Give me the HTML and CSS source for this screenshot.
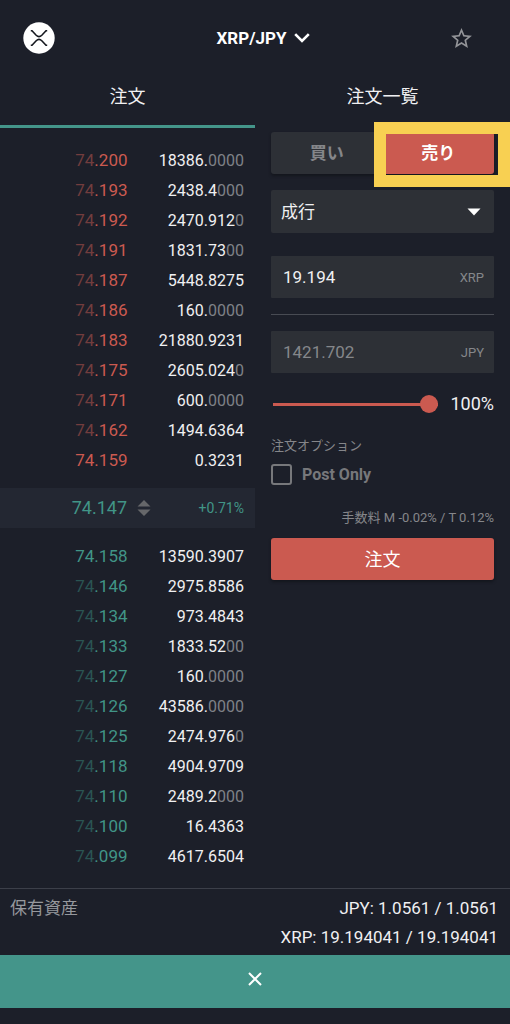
FILE: index.html
```html
<!DOCTYPE html>
<html lang="ja">
<head>
<meta charset="utf-8">
<meta name="viewport" content="width=device-width, initial-scale=1">
<title>XRP/JPY</title>
<link rel="stylesheet" href="styles.css">
</head>
<body>
<div class="app">
  <header class="header">
    <svg class="logo" viewBox="0 0 32 32" aria-label="XRP" role="img">
      <circle cx="16" cy="16" r="15.7" fill="#fff"/>
      <path d="M7.800 8.700H9L13.200 13.200Q16 16 18.800 13.200L23 8.700H24.200M7.800 23.300H9L13.200 18.800Q16 16 18.800 18.800L23 23.300H24.200" fill="none" stroke="#15181f" stroke-width="1.600"/>
    </svg>
    <button class="pair" type="button">XRP/JPY
      <svg class="chevron" viewBox="0 0 16 10" aria-hidden="true"><path d="M1.200 1.200L8 8l6.800-6.800" fill="none" stroke="#fff" stroke-width="2.600"/></svg>
    </button>
    <button class="favorite" type="button" aria-label="お気に入り">
      <svg class="star" viewBox="0 0 24 24" aria-hidden="true"><path fill="#939498" d="M22 9.240l-7.190-.620L12 2 9.190 8.630 2 9.240l5.460 4.730L5.820 21 12 17.270 18.180 21l-1.630-7.030L22 9.240zM12 15.400l-3.760 2.270 1-4.280-3.320-2.880 4.380-.380L12 6.100l1.710 4.040 4.380.380-3.320 2.880 1 4.280L12 15.400z"/></svg>
    </button>
  </header>

  <nav class="tabs">
    <button class="tab tab-active" type="button">注文</button>
    <button class="tab" type="button">注文一覧</button>
  </nav>

  <main class="main">
    <section class="book">
      <table class="orders asks">
        <tbody>
          <tr><td class="price"><span>74</span>.200</td><td class="amount">18386.<span>0000</span></td></tr>
          <tr><td class="price"><span>74</span>.193</td><td class="amount">2438.4<span>000</span></td></tr>
          <tr><td class="price"><span>74</span>.192</td><td class="amount">2470.912<span>0</span></td></tr>
          <tr><td class="price"><span>74</span>.191</td><td class="amount">1831.73<span>00</span></td></tr>
          <tr><td class="price"><span>74</span>.187</td><td class="amount">5448.8275</td></tr>
          <tr><td class="price"><span>74</span>.186</td><td class="amount">160.<span>0000</span></td></tr>
          <tr><td class="price"><span>74</span>.183</td><td class="amount">21880.9231</td></tr>
          <tr><td class="price"><span>74</span>.175</td><td class="amount">2605.024<span>0</span></td></tr>
          <tr><td class="price"><span>74</span>.171</td><td class="amount">600.<span>0000</span></td></tr>
          <tr><td class="price"><span>74</span>.162</td><td class="amount">1494.6364</td></tr>
          <tr><td class="price">74.159</td><td class="amount">0.3231</td></tr>
        </tbody>
      </table>
      <div class="last">
        <span class="last-price">74.147</span>
        <svg class="sort" viewBox="0 0 14 18" aria-hidden="true"><path d="M0.500 7.500L7 1l6.500 6.500zM0.500 10.500L7 17l6.500-6.500z" fill="#66676a"/></svg>
        <span class="change">+0.71%</span>
      </div>
      <table class="orders bids">
        <tbody>
          <tr><td class="price">74.158</td><td class="amount">13590.3907</td></tr>
          <tr><td class="price"><span>74</span>.146</td><td class="amount">2975.8586</td></tr>
          <tr><td class="price"><span>74</span>.134</td><td class="amount">973.4843</td></tr>
          <tr><td class="price"><span>74</span>.133</td><td class="amount">1833.52<span>00</span></td></tr>
          <tr><td class="price"><span>74</span>.127</td><td class="amount">160.<span>0000</span></td></tr>
          <tr><td class="price"><span>74</span>.126</td><td class="amount">43586.<span>0000</span></td></tr>
          <tr><td class="price"><span>74</span>.125</td><td class="amount">2474.976<span>0</span></td></tr>
          <tr><td class="price"><span>74</span>.118</td><td class="amount">4904.9709</td></tr>
          <tr><td class="price"><span>74</span>.110</td><td class="amount">2489.2<span>000</span></td></tr>
          <tr><td class="price"><span>74</span>.100</td><td class="amount">16.4363</td></tr>
          <tr><td class="price"><span>74</span>.099</td><td class="amount">4617.6504</td></tr>
        </tbody>
      </table>
    </section>

    <form class="form">
      <div class="sides">
        <button class="side" type="button">買い</button>
        <button class="side side-sell" type="button">売り</button>
        <div class="highlight"></div>
      </div>
      <div class="select-box">
        <select class="select" aria-label="注文タイプ"><option>成行</option></select>
        <svg class="caret" viewBox="0 0 14 8" aria-hidden="true"><path d="M0.500 0.500h13L7 7.500z" fill="#fff"/></svg>
      </div>
      <div class="field">
        <input class="input" id="qty" type="text" value="19.194">
        <label class="unit" for="qty">XRP</label>
      </div>
      <hr class="rule">
      <div class="field">
        <input class="input input-muted" id="total" type="text" value="1421.702">
        <label class="unit" for="total">JPY</label>
      </div>
      <div class="slider">
        <input class="range" id="ratio" type="range" min="0" max="100" value="100">
        <label class="ratio" for="ratio">100%</label>
      </div>
      <div class="option-title">注文オプション</div>
      <label class="option" for="post"><input class="check" id="post" type="checkbox">Post Only</label>
      <div class="fee">手数料 M -0.02% / T 0.12%</div>
      <button class="submit" type="button">注文</button>
    </form>
  </main>

  <section class="assets">
    <div class="assets-title">保有資産</div>
    <div class="assets-values">
      <div>JPY: 1.0561 / 1.0561</div>
      <div>XRP: 19.194041 / 19.194041</div>
    </div>
  </section>
  <button class="close" type="button" aria-label="閉じる">
    <svg class="close-icon" viewBox="0 0 14 14" aria-hidden="true"><path d="M1 1l12 12M13 1L1 13" fill="none" stroke="#fff" stroke-width="2"/></svg>
  </button>
</div>
</body>
</html>
```
FILE: styles.css
```css
* { box-sizing: border-box; }

body {
  margin: 0;
  background: #1c1f29;
  color: #f0f0f2;
  font-family: Roboto, "Noto Sans CJK JP", sans-serif;
  font-size: 17px;
}

button, input, select {
  margin: 0;
  padding: 0;
  border: 0;
  background: none;
  color: inherit;
  font: inherit;
}

svg { display: block; }

.app {
  display: flex;
  flex-direction: column;
  min-height: 100vh;
  padding-bottom: 16px;
}

.header {
  display: grid;
  grid-template-columns: 1fr auto 1fr;
  align-items: center;
  height: 76px;
  padding: 0 23px;
}
.logo { width: 32px; height: 32px; }
.pair {
  display: flex;
  align-items: center;
  gap: 8px;
  padding-left: 17px;
  color: #fff;
  font-weight: 700;
}
.chevron { width: 16px; height: 10px; }
.favorite { justify-self: end; padding-right: 13px; }
.star { width: 25px; height: 25px; }

.tabs { display: grid; grid-template-columns: 1fr 1fr; }
.tab {
  height: 52px;
  padding-bottom: 12px;
  border-bottom: 3px solid transparent;
  font-size: 18px;
}
.tab-active { border-color: #44958a; }

.main { display: grid; grid-template-columns: minmax(0, 1fr) minmax(0, 1fr); }

.book { padding-top: 17px; }
.orders {
  width: 100%;
  border-collapse: collapse;
  table-layout: fixed;
}
.orders td { height: 30px; padding: 0; text-align: right; }
.price { width: 50%; font-size: 17px; }
.orders .amount { padding-right: 11px; font-size: 16px; }
.amount span { color: #7f8187; }
.asks .price { color: #cb5a50; }
.asks .price span { color: #723d3e; }
.bids .price { color: #419587; }
.bids .price span { color: #2a5453; }

/* The column split is taken inside the padding, so the price column is widened to meet the table's. */
.last {
  display: grid;
  grid-template-columns: calc(50% + 5px) 14px 1fr;
  column-gap: 10px;
  align-items: center;
  height: 40px;
  margin: 13px 0;
  padding-right: 11px;
  background: #232732;
  color: #419587;
}
.last-price { padding-bottom: 2px; font-size: 18px; text-align: right; }
.sort { width: 14px; height: 18px; }
.change { font-size: 14px; text-align: right; }

.form { padding: 4px 16px 0; }

.sides {
  position: relative;
  display: grid;
  grid-template-columns: 1fr 1fr;
}
.side {
  height: 42px;
  padding-bottom: 4px;
  border-radius: 3px 0 0 3px;
  background: #2d3036;
  box-shadow: 0 2px 3px #14161d;
  color: #85868a;
  font-weight: 700;
}
.side-sell { border-radius: 0 3px 3px 0; background: #cb5a50; color: #fff; }
.highlight {
  position: absolute;
  top: -10px;
  right: -16px;
  width: 136px;
  height: 65px;
  border: 12px solid #f8d052;
  pointer-events: none;
}

.select-box { position: relative; margin-top: 16px; }
.select {
  width: 100%;
  height: 43px;
  padding: 0 10px;
  border-radius: 2px;
  background: #2d3036;
  appearance: none;
}
.caret {
  position: absolute;
  top: 18px;
  right: 13px;
  width: 14px;
  height: 8px;
  pointer-events: none;
}

.field {
  display: flex;
  align-items: center;
  height: 42px;
  padding: 0 10px 0 12px;
  border-radius: 1px;
  background: #2d3036;
}
.select-box + .field { margin-top: 23px; }
.input { flex: 1; min-width: 0; outline: 0; }
.input-muted { color: #85878b; }
.unit { color: #85878b; font-size: 13px; }
.rule { height: 1px; margin: 16px 0; border: 0; background: #484b53; }

.slider {
  display: flex;
  align-items: center;
  gap: 12px;
  margin-top: 20px;
  padding-left: 2px;
}
.range { flex: 1; min-width: 0; height: 22px; appearance: none; }
.range::-webkit-slider-runnable-track { height: 3px; background: #cb5a50; }
.range::-webkit-slider-thumb {
  width: 18px;
  height: 18px;
  margin-top: -8px;
  border-radius: 50%;
  background: #cb5a50;
  appearance: none;
}
.ratio { font-size: 18px; line-height: 22px; }

.option-title { margin-top: 21px; color: #85868a; font-size: 13px; line-height: 20px; }
.option {
  display: flex;
  align-items: center;
  gap: 10px;
  margin-top: 8px;
  color: #77787b;
  font-size: 16px;
  font-weight: 700;
}
.check {
  width: 21px;
  height: 21px;
  border: 2px solid #77787b;
  border-radius: 3px;
  appearance: none;
}
.fee { margin-top: 23px; color: #85868a; font-size: 13px; line-height: 20px; text-align: right; }
.submit {
  width: 100%;
  height: 42px;
  margin-top: 10px;
  padding-bottom: 2px;
  border-radius: 3px;
  background: #cb5a50;
  box-shadow: 0 2px 3px #14161d;
  color: #fff;
  font-size: 18px;
}

.assets {
  display: flex;
  justify-content: space-between;
  margin-top: auto;
  padding: 5px 12px 3px 10px;
  border-top: 1px solid #3c3f49;
  line-height: 29px;
}
.assets-title { color: #96989d; }
.assets-values { text-align: right; }
.close {
  display: flex;
  align-items: center;
  justify-content: center;
  height: 53px;
  padding-bottom: 6px;
  background: #44958a;
}
.close-icon { width: 14px; height: 14px; }
```
